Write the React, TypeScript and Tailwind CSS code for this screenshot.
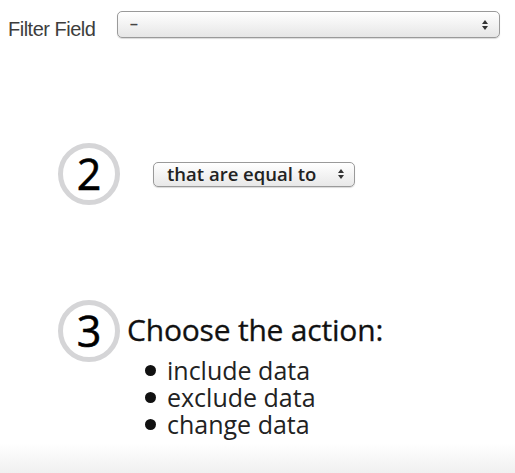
const Arrows = () => (
    <svg width="8" height="12" viewBox="0 0 8 12" className="shrink-0">
        <path d="M4 1 L7 5 L1 5 Z" fill="#333" />
        <path d="M4 11 L7 7 L1 7 Z" fill="#333" />
    </svg>
);

const StepCircle = ({ n }: { n: string }) => (
    <div className="flex w-[62px] h-[62px] shrink-0 items-center justify-center rounded-full border-[5px] border-[#d5d5d7] bg-white">
        <span className="text-[43px] leading-none text-black font-['Open_Sans',sans-serif] [-webkit-text-stroke:0.6px_black] -mt-[1px]">{n}</span>
    </div>
);

const App = () => {
    const actions = ['include data', 'exclude data', 'change data'];

    return (
        <div className="relative w-[515px] h-[473px] overflow-hidden bg-white font-['Open_Sans',sans-serif]">
            {/* filter field */}
            <div className="flex flex-row items-start h-[39px] pt-[11px] pl-[8px]">
                <span className="w-[109px] mt-[7px] text-[20px] leading-[22px] text-[#3d3d3d] font-['Liberation_Sans',Arial,sans-serif] tracking-[-0.5px]">
                    Filter Field
                </span>
                <div className="flex w-[383px] h-[27px] items-center justify-between pl-[12px] pr-[10px]
                                border border-[#9a9a9a] rounded-[5px] bg-gradient-to-b from-white to-[#e6e6e6] shadow-[0_1px_1px_rgba(0,0,0,0.15)]">
                    <span className="text-[14px] font-bold text-[#444] font-['Liberation_Sans',Arial,sans-serif]">–</span>
                    <Arrows />
                </div>
            </div>

            {/* step 2 */}
            <div className="flex flex-row items-center mt-[104px] ml-[58px]">
                <StepCircle n="2" />
                <div className="flex ml-[33px] w-[202px] h-[25px] items-center justify-between pl-[13px] pr-[9px]
                                border border-[#9a9a9a] rounded-[5px] bg-gradient-to-b from-white to-[#e8e8e8] shadow-[0_1px_1px_rgba(0,0,0,0.15)]">
                    <span className="text-[18.5px] leading-none font-semibold text-[#222]">that are equal to</span>
                    <Arrows />
                </div>
            </div>

            {/* step 3 */}
            <div className="flex flex-row items-center mt-[95px] ml-[58px]">
                <StepCircle n="3" />
                <span className="ml-[7px] -mt-[2px] text-[30px] leading-none text-[#111] tracking-[-0.2px] [-webkit-text-stroke:0.3px_#111]">Choose the action:</span>
            </div>
            <ul className="flex flex-col ml-[145px] -mt-[5px]">
                {actions.map((a) => (
                    <li key={a} className="flex flex-row items-center h-[27px] text-[25px] leading-[27px] text-[#222]">
                        <span className="w-[11px] h-[11px] shrink-0 rounded-full bg-[#111] mr-[11px]" />
                        {a}
                    </li>
                ))}
            </ul>

            <div className="absolute bottom-0 left-0 w-full h-[30px] bg-gradient-to-b from-white to-[#f0f0f0]" />
        </div>
    );
};

export default App;
